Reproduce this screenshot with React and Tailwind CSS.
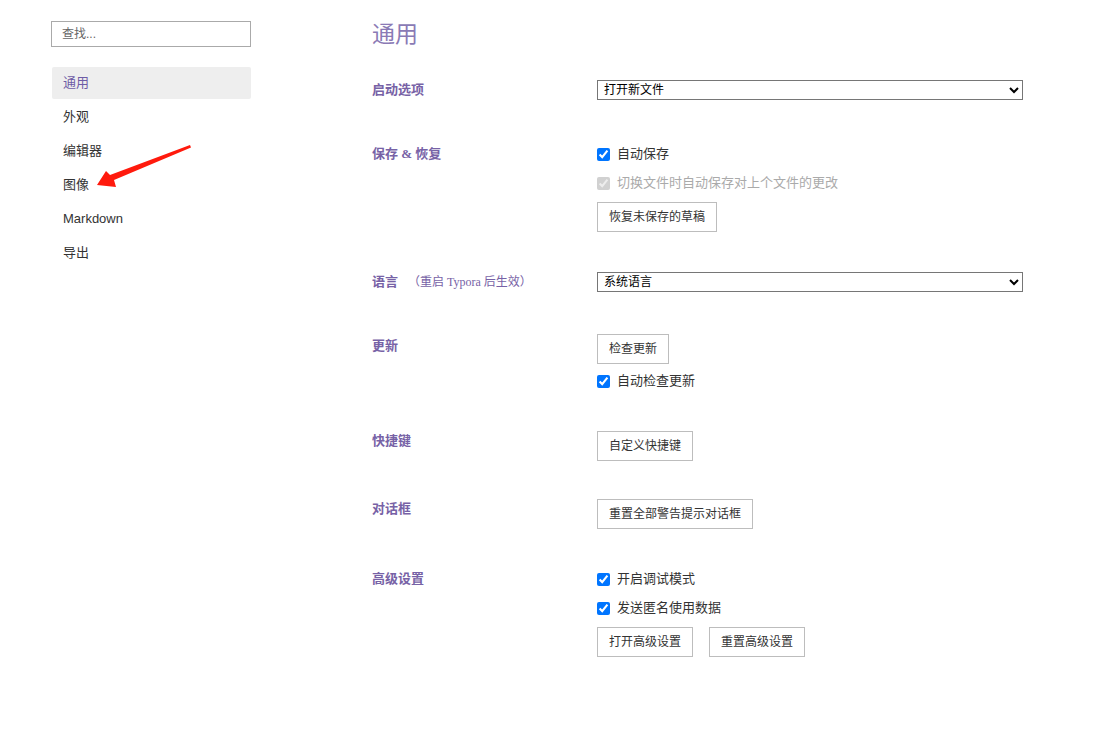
import React from "react";

const labelCls =
  "w-[225px] shrink-0 text-[13px] leading-5 font-bold text-[#7762a6] [font-family:'Liberation_Serif','Noto_Sans_CJK_SC',serif]";

const Btn = ({ children }) => (
  <button className="h-[30px] px-[11px] border border-[#bdbdbd] bg-white text-[12px] text-[#333]">
    {children}
  </button>
);

const Check = ({ children, disabled }) => (
  <label className={`flex items-center h-5 text-[13px] ${disabled ? "text-[#aaa]" : "text-[#333]"}`}>
    <input
      type="checkbox"
      defaultChecked
      disabled={disabled}
      className="m-0 w-[13px] h-[13px] mr-[7px] accent-[#0075ff]"
    />
    {children}
  </label>
);

const Select = ({ value }) => (
  <select
    defaultValue={value}
    className="w-[426px] h-5 border border-[#767676] bg-white text-[12px] text-black pl-[2px] appearance-auto"
  >
    <option>{value}</option>
  </select>
);

const Row = ({ label, mt, children }) => (
  <div className="flex" style={{ marginTop: mt }}>
    <div className={labelCls}>{label}</div>
    <div className="flex flex-col items-start">{children}</div>
  </div>
);

const nav = ["通用", "外观", "编辑器", "图像", "Markdown", "导出"];

export default function App() {
  return (
    <div className="relative w-[1099px] h-[738px] bg-white flex [font-family:'Liberation_Sans','Noto_Sans_CJK_SC',sans-serif]">
      <div className="w-[200px] ml-[51px] pt-[21px] shrink-0">
        <input
          placeholder="查找..."
          className="w-[200px] h-[26px] border border-[#aaa] pl-[10px] text-[12px] text-[#333] placeholder:text-[#666] outline-none"
        />
        <div className="mt-[20px]">
          {nav.map((n, i) => (
            <div
              key={n}
              className={`h-[32px] mb-[2px] ml-px flex items-center pl-[11px] text-[13px] rounded-[2px] ${
                i === 0 ? "bg-[#eeeeee] text-[#6e5ca6]" : "text-[#333]"
              }`}
            >
              {n}
            </div>
          ))}
        </div>
      </div>

      <div className="ml-[121px] pt-[18px]">
        <h1 className="text-[23px] leading-8 text-[#8a7ab5] font-normal">通用</h1>

        <Row label="启动选项" mt={30}>
          <Select value="打开新文件" />
        </Row>

        <Row label="保存 & 恢复" mt={44}>
          <Check>自动保存</Check>
          <div className="mt-[9px]">
            <Check disabled>切换文件时自动保存对上个文件的更改</Check>
          </div>
          <div className="mt-[9px]">
            <Btn>恢复未保存的草稿</Btn>
          </div>
        </Row>

        <Row
          label={
            <span>
              语言
              <span className="font-normal text-[12px] ml-[10px]">（重启 Typora 后生效）</span>
            </span>
          }
          mt={40}
        >
          <Select value="系统语言" />
        </Row>

        <Row label={<span className="block pt-[2px]">更新</span>} mt={42}>
          <Btn>检查更新</Btn>
          <div className="mt-[7px]">
            <Check>自动检查更新</Check>
          </div>
        </Row>

        <Row label="快捷键" mt={40}>
          <Btn>自定义快捷键</Btn>
        </Row>

        <Row label="对话框" mt={38}>
          <Btn>重置全部警告提示对话框</Btn>
        </Row>

        <Row label="高级设置" mt={40}>
          <Check>开启调试模式</Check>
          <div className="mt-[9px]">
            <Check>发送匿名使用数据</Check>
          </div>
          <div className="mt-[9px] flex gap-4">
            <Btn>打开高级设置</Btn>
            <Btn>重置高级设置</Btn>
          </div>
        </Row>
      </div>

      <svg className="absolute left-0 top-0 pointer-events-none" width="300" height="300">
        <polygon
          points="190,145 191,147.5 114,180 116,187 97,185 106,171 110,175"
          fill="#ff1a0d"
        />
      </svg>
    </div>
  );
}
